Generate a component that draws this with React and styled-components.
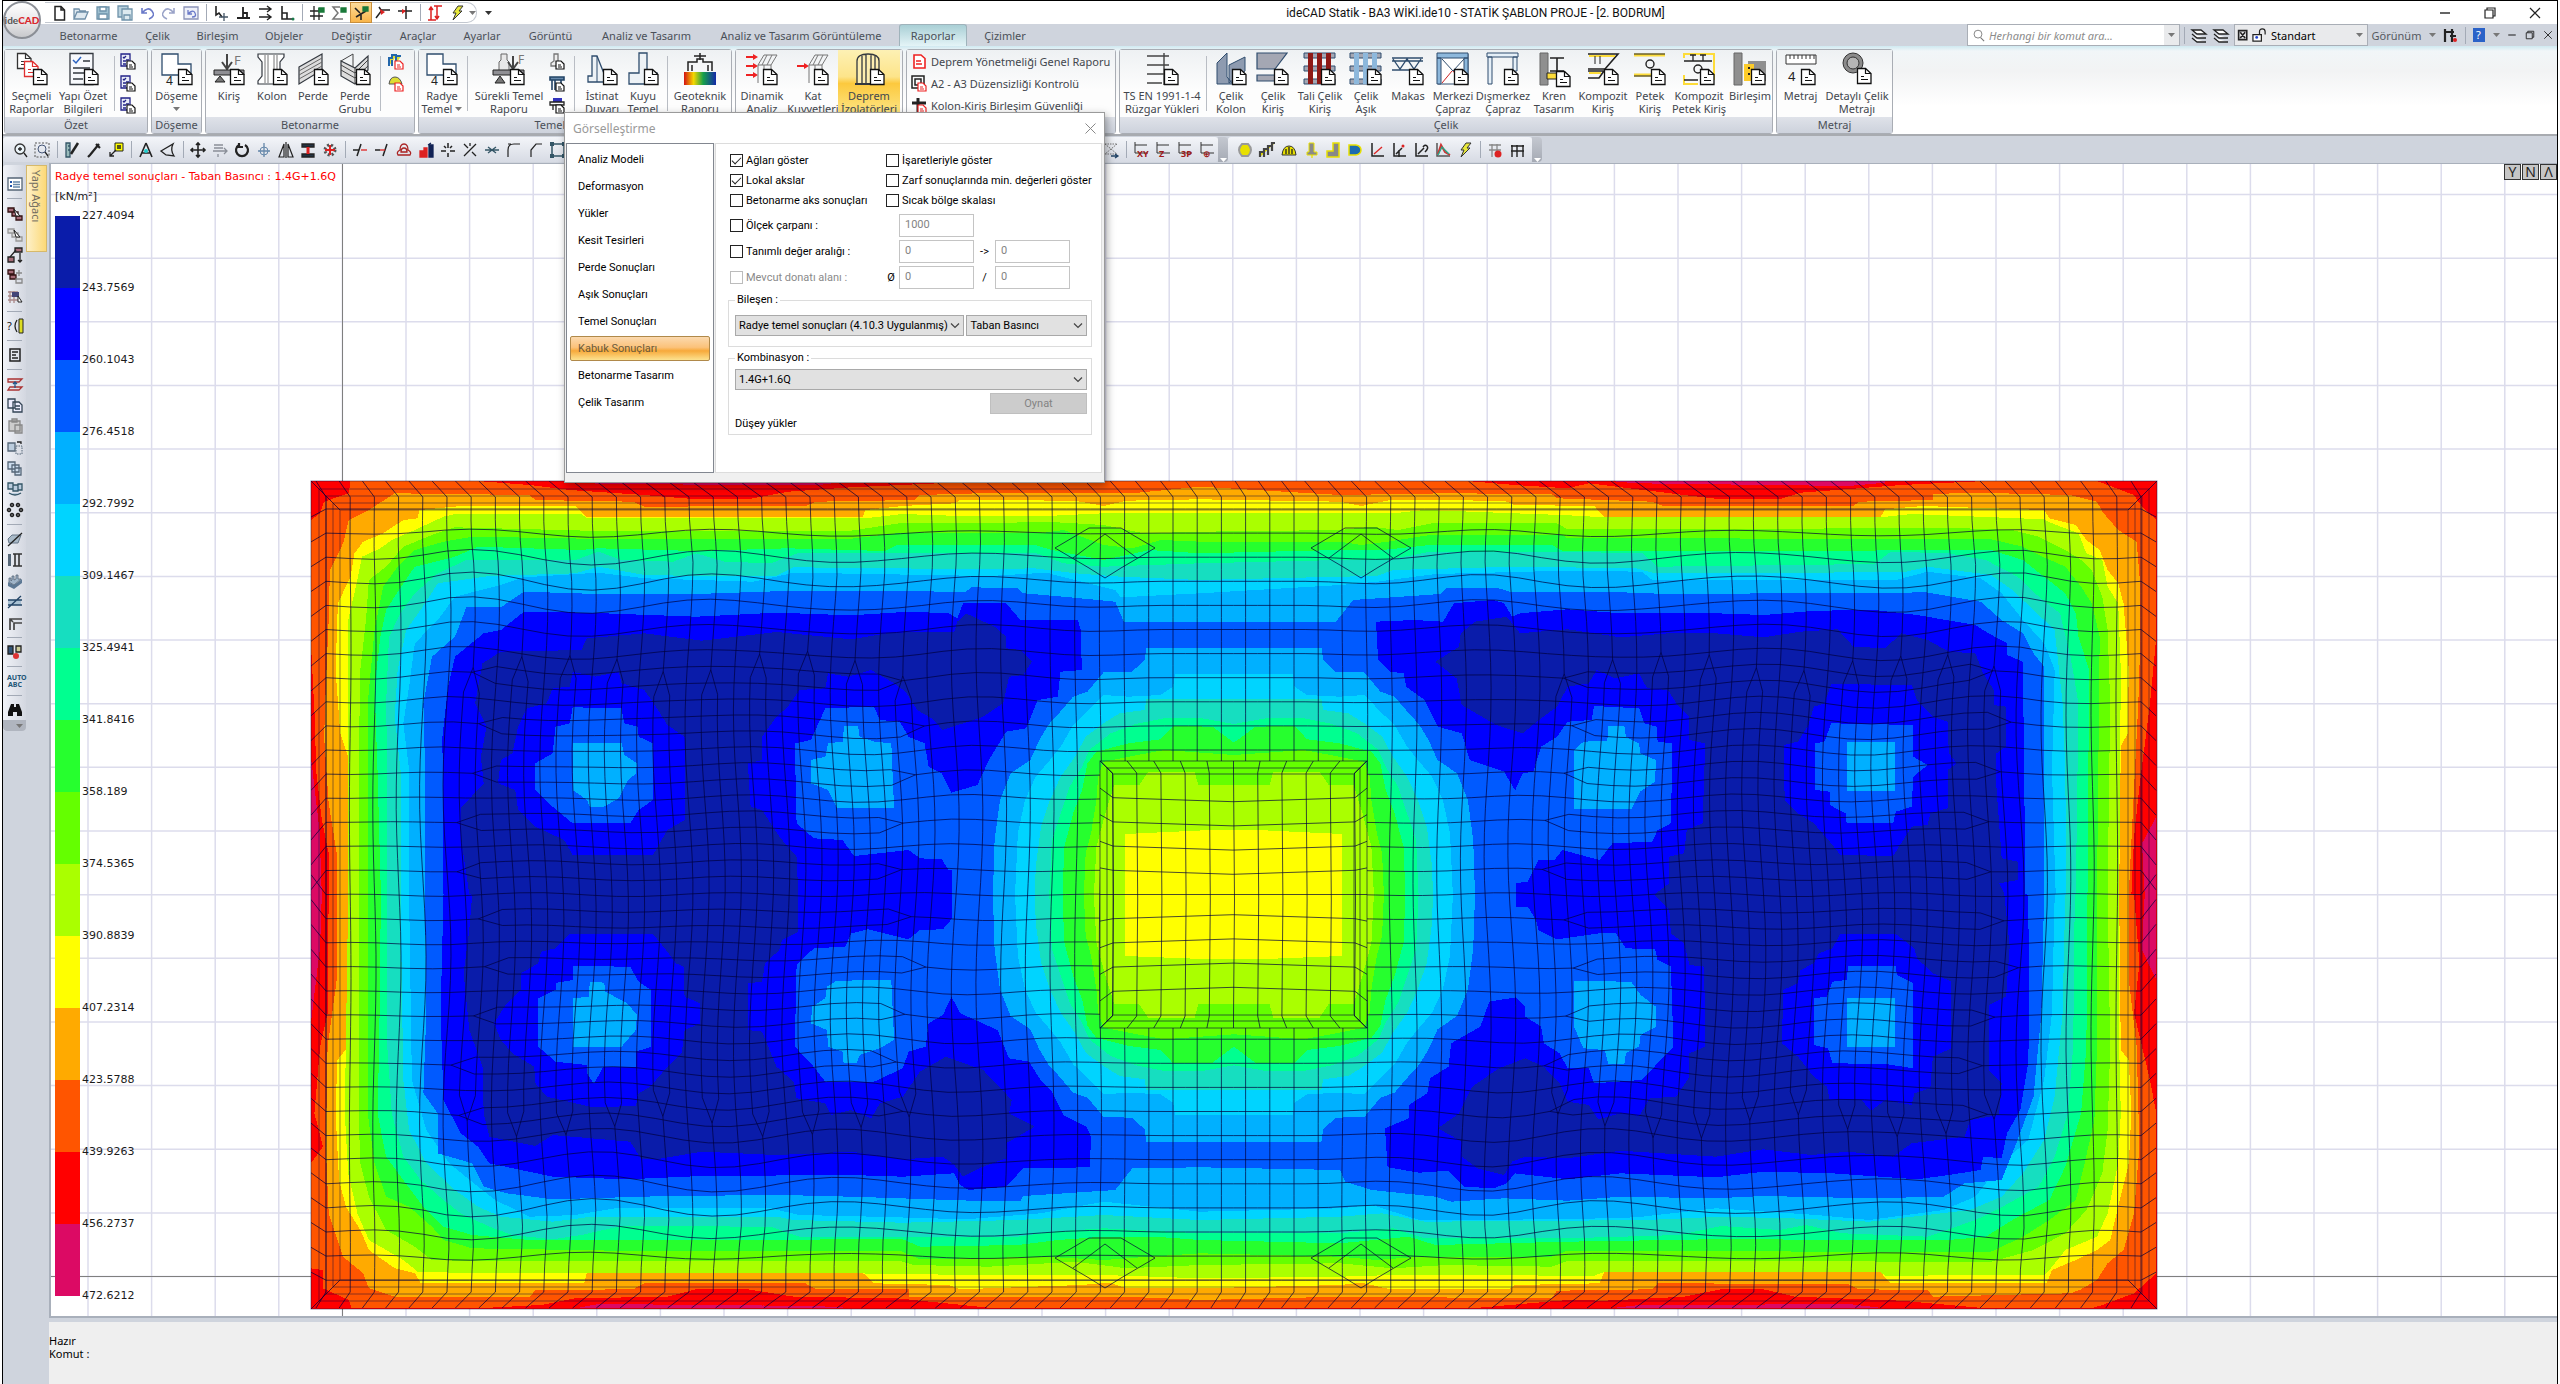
import React from "react";
import styled, { createGlobalStyle, css } from "styled-components";

const ui = `"Noto Sans", "Open Sans", sans-serif`;
const narrow = `Roboto, "Noto Sans", sans-serif`;
const verdana = `"DejaVu Sans", sans-serif`;

const Global = createGlobalStyle`
  *, *::before, *::after { box-sizing: border-box; }
  body { margin: 0; background: #fff; font-family: ${ui}; font-size: 11px; color: #1b1b1b; overflow: hidden; }
  button, input, select { font: inherit; color: inherit; margin: 0; }
  ul, ol { list-style: none; margin: 0; padding: 0; }
  svg { overflow: visible; }
`;

/* ---------- window ---------- */

const Window = styled.div`
  position: relative;
  display: flex;
  flex-direction: column;
  height: 100vh;
  margin: 0 2px;
  border: 1px solid #000;
  border-bottom: 0;
  background: #cfd4dd;
`;

const plain = css`
  border: 0;
  padding: 0;
  background: none;
  display: flex;
  align-items: center;
  justify-content: center;
`;

const TitleBar = styled.header`
  display: flex;
  align-items: center;
  height: 23px;
  background: #fff;
  padding-left: 42px;
`;
const QuickBar = styled.div`
  display: flex;
  align-items: center;
  width: 432px;
  height: 21px;
  padding-left: 3px;
  border: 1px solid #c3c8d0;
  border-left: 0;
  border-radius: 0 10px 10px 0;
`;
const ToolButton = styled.button`
  ${plain}
  flex: none;
  width: ${(p) => p.$w || 22}px;
  height: 21px;
  ${(p) => p.$on && "background: linear-gradient(#fddc9a, #f9b54a); border: 1px solid #c98f3c;"}
`;
const BarSep = styled.span`
  flex: none;
  width: ${(p) => p.$w || 8}px;
  height: 17px;
  background: linear-gradient(#a3aab6, #a3aab6) center / 1px 100% no-repeat;
`;
const Title = styled.h1`
  margin: 0;
  flex: 1;
  text-align: center;
  font: 400 12px ${narrow};
  color: #111;
  padding-left: 30px;
`;
const WinButton = styled.button`
  ${plain}
  width: 45px;
  height: 22px;
`;
const LogoButton = styled.button`
  ${plain}
  position: absolute;
  left: 0;
  top: 0;
  width: 38px;
  height: 38px;
  border-radius: 50%;
  border: 2px solid #8b8f96;
  background: linear-gradient(#ffffff, #e4e4e6 60%, #c8c9cc);
  font: 700 10px Lato, sans-serif;
  color: #555;
  b { color: #d9262c; }
`;

const TabRow = styled.nav`
  display: flex;
  height: 22px;
  padding-left: 43px;
  background: #cfd4dd;
`;
const Tab = styled.button`
  ${plain}
  width: ${(p) => p.$w}px;
  height: 22px;
  color: #4b5058;
  white-space: nowrap;
  ${(p) =>
    p.$on &&
    css`
      border: 1px solid #9fb3bb;
      border-bottom: 0;
      border-radius: 3px 3px 0 0;
      background: linear-gradient(#a9cfd5, #e4f4f7);
      margin-left: 3px;
    `}
`;
const TabTools = styled.div`
  display: flex;
  align-items: center;
  margin-left: auto;
  color: #55595f;
`;
const Search = styled.label`
  display: flex;
  align-items: center;
  width: 213px;
  height: 22px;
  border: 1px solid #a9aeb6;
  background: #fff;
  padding-left: 3px;
  input {
    flex: 1;
    min-width: 0;
    border: 0;
    padding: 0 4px;
    background: none;
    font-style: italic;
  }
  input::placeholder { color: #8b8b8b; opacity: 1; }
`;
const Drop = styled.span`
  display: flex;
  align-items: center;
  justify-content: center;
  width: ${(p) => p.$w || 15}px;
  height: 20px;
  background: ${(p) => p.$bg || "none"};
`;
const LayerBox = styled.label`
  display: flex;
  align-items: center;
  width: 134px;
  height: 22px;
  padding-left: 2px;
  gap: 2px;
  border: 1px solid #a9aeb6;
  background: #e9eaec;
  color: #000;
  margin-left: 2px;
  select { flex: 1; border: 0; background: none; appearance: none; padding: 0 2px; }
`;

/* ---------- ribbon ---------- */

const Ribbon = styled.div`
  display: flex;
  gap: 3px;
  height: 90px;
  padding: 3px 1px 2px;
  background: linear-gradient(#cfe9f1, #f1f6f8 5px, #f2f3f4 25px, #ffffff 60px);
  border-bottom: 2px solid #a8abb0;
`;
const GroupBox = styled.section`
  display: flex;
  flex-direction: column;
  flex: none;
  width: ${(p) => p.$w}px;
  height: 85px;
  border: 1px solid #a9adb4;
  border-radius: 3px;
`;
const GroupBody = styled.div`
  display: flex;
  flex: 1;
  background: linear-gradient(#eef1f3, #fdfdfd 60%);
`;
const GroupName = styled.h2`
  margin: 0;
  height: 16px;
  line-height: 16px;
  text-align: center;
  font-size: 11px;
  font-weight: 400;
  color: #4a4f57;
  background: linear-gradient(#dfe2e9, #cdd2dc);
`;
const Big = styled.button`
  border: 0;
  padding: 3px 0 0;
  background: ${(p) => (p.$on ? "linear-gradient(#fdf1b4, #fde48a 40%, #fcc93e 50%, #fde88c)" : "none")};
  width: ${(p) => p.$w}px;
  flex: none;
  display: flex;
  flex-direction: column;
  align-items: center;
  line-height: 13px;
  color: #42464d;
  white-space: nowrap;
`;
const ArtBox = styled.svg`
  flex: none;
  margin-bottom: 3px;
`;
const Line = styled.span`
  display: flex;
  align-items: center;
  gap: 3px;
  height: 13px;
`;
const Rule = styled.span`
  flex: none;
  width: ${(p) => p.$w}px;
  margin: 6px 0;
  background: linear-gradient(#b9bdc4, #b9bdc4) center / 1px 100% no-repeat;
`;
const SmallCol = styled.div`
  flex: none;
  width: ${(p) => p.$w}px;
  display: flex;
  flex-direction: column;
  button { ${plain} height: 22px; }
`;
const LinkCol = styled.div`
  display: flex;
  flex-direction: column;
  padding-left: 4px;
  button {
    ${plain}
    justify-content: flex-start;
    gap: 4px;
    height: 22px;
    color: #42464d;
    white-space: nowrap;
  }
`;

/* ---------- icon toolbar ---------- */

const IconRow = styled.div`
  display: flex;
  align-items: center;
  height: 27px;
  flex: none;
`;
const IconStrip = styled.div`
  display: flex;
  align-items: center;
  width: ${(p) => p.$w}px;
  height: 25px;
  padding-left: 6px;
  background: linear-gradient(#f3f5f9, #d7dbe4);
  border-radius: 3px;
`;
const Stretch = styled.span`
  flex: 1;
`;
const More = styled.button`
  ${plain}
  width: 10px;
  height: 25px;
  align-items: flex-end;
  background: linear-gradient(#c4c8d0, #a5aab4);
  border-radius: 0 4px 4px 0;
`;

/* ---------- work area ---------- */

const Body = styled.div`
  display: flex;
  flex: 1;
  min-height: 0;
`;
const Side = styled.aside`
  display: flex;
  align-items: flex-start;
  width: 46px;
  flex: none;
  padding-top: 2px;
`;
const SideTools = styled.div`
  display: flex;
  flex-direction: column;
  align-items: center;
  width: 23px;
  background: linear-gradient(90deg, #f1f3f8, #d3d7e0);
  border-radius: 3px;
  padding-top: 8px;
`;
const SideSep = styled.span`
  width: 15px;
  height: 8px;
  background: linear-gradient(#a3aab6, #a3aab6) center / 100% 1px no-repeat;
`;
const SideFoot = styled.span`
  width: 23px;
  height: 11px;
  display: flex;
  justify-content: flex-end;
  align-items: center;
  background: #b0b5bf;
  border-radius: 0 0 4px 4px;
  padding-right: 3px;
`;
const TreeTab = styled.button`
  ${plain}
  justify-content: flex-start;
  writing-mode: vertical-rl;
  width: 21px;
  height: 87px;
  padding: 4px 0;
  font-size: 11px;
  color: #6f6a5e;
  border: 1px solid #d6b96b;
  background: linear-gradient(90deg, #fdf0c8, #fcd977);
`;
const Work = styled.main`
  flex: 1;
  min-width: 0;
  display: flex;
  flex-direction: column;
`;
const Canvas = styled.div`
  position: relative;
  flex: 1;
  overflow: hidden;
  background: #fff;
  border: 1px solid #a9b0bb;
  border-right: 0;
  border-width: 1px 0 2px 2px;
  padding: 6px 0 0 4px;
  font-family: ${verdana};
  font-size: 11px;
`;
const Model = styled.svg`
  position: absolute;
  left: 0;
  top: 0;
  width: 100%;
  height: 100%;
`;
const Caption = styled.p`
  position: relative;
  margin: 0;
  line-height: 14px;
  margin-bottom: 6px;
  color: ${(p) => p.$c || "#1b1b1b"};
`;
const Scale = styled.div`
  position: relative;
  display: flex;
  gap: 2px;
  margin-top: -1px;
`;
const Swatches = styled.ul`
  width: 25px;
  padding-top: 7px;
`;
const Swatch = styled.li`
  height: 72px;
  background: ${(p) => p.$c};
`;
const Values = styled.ol`
  li { height: 72px; line-height: 14px; }
`;
const ViewKeys = styled.div`
  position: absolute;
  right: 0;
  top: 0;
  display: flex;
  gap: 1px;
  button {
    ${plain}
    width: 17px;
    height: 16px;
    background: #c6c6c6;
    border: 1px solid #333;
    font: 14px/14px ${ui};
    color: #222;
  }
`;
const Status = styled.footer`
  height: 62px;
  margin-top: 4px;
  padding-top: 12px;
  background: #efefef;
  font-size: 11px;
  line-height: 13px;
  color: #000;
  p { margin: 0; }
`;

/* ---------- dialog ---------- */

const Dialog = styled.section`
  position: absolute;
  left: 561px;
  top: 111px;
  width: 541px;
  height: 371px;
  display: flex;
  flex-direction: column;
  background: #f0f0f0;
  border: 1px solid #9a9a9a;
  box-shadow: 2px 3px 8px rgba(0, 0, 0, 0.35);
  font-family: ${narrow};
  color: #000;
`;
const DialogHead = styled.header`
  display: flex;
  justify-content: space-between;
  align-items: center;
  height: 30px;
  padding: 0 8px;
  background: #fff;
  color: #9a9a9a;
  h2 { margin: 0; font: 400 12px ${ui}; }
  button { ${plain} }
`;
const DialogBody = styled.div`
  display: flex;
  height: 330px;
  gap: 1px;
`;
const PageList = styled.ul`
  width: 148px;
  margin: 0 0 0 1px;
  padding: 3px;
  background: #fff;
  border: 1px solid #828790;
`;
const PageItem = styled.button`
  ${plain}
  justify-content: flex-start;
  width: 140px;
  height: 25px;
  margin-bottom: 2px;
  padding-left: 7px;
  border-radius: 2px;
  border: 1px solid ${(p) => (p.$on ? "#b0894a" : "transparent")};
  color: ${(p) => (p.$on ? "#6a5a3a" : "#000")};
  ${(p) => p.$on && "background: linear-gradient(#fbd9ae, #fbc27a 45%, #f7a93a 60%, #fce28f);"}
`;
const Pane = styled.form`
  flex: 1;
  margin-right: 2px;
  padding: 6px 9px 0 12px;
  background: #fff;
  border: 1px solid #dcdcdc;
`;
const Checks = styled.div`
  display: grid;
  grid-template-columns: 156px 1fr;
  grid-auto-rows: 20px;
  align-items: center;
  padding-left: 2px;
`;
const Fields = styled.div`
  display: grid;
  grid-template-columns: 153px 16px 75px 21px 75px;
  grid-auto-rows: 23px;
  row-gap: 3px;
  align-items: center;
  padding: 4px 0 0 2px;
  text-align: center;
`;
const CheckLabel = styled.label`
  display: flex;
  align-items: center;
  gap: 3px;
  white-space: nowrap;
  color: ${(p) => (p.$off ? "#8a8a8a" : "#000")};
  input {
    appearance: none;
    flex: none;
    display: grid;
    place-items: center;
    width: 13px;
    height: 13px;
    border: 1px solid ${(p) => (p.$off ? "#bcbcbc" : "#222")};
    background: #fff;
  }
  input:checked::after {
    content: "";
    width: 9px;
    height: 5px;
    border: solid #222;
    border-width: 0 0 1px 1px;
    transform: translateY(-1px) rotate(-45deg);
  }
`;
const Field = styled.input`
  width: 75px;
  height: 23px;
  padding: 0 5px 2px;
  border: 1px solid #c4c4c4;
  background: #fff;
  color: #838383;
`;
const Box = styled.fieldset`
  height: ${(p) => p.$h}px;
  margin: ${(p) => p.$mt}px 0 0;
  padding: ${(p) => p.$pt}px 4px 0 6px;
  border: 1px solid #dcdcdc;
  legend { height: 14px; line-height: 14px; padding: 0 2px; }
`;
const Row = styled.div`
  display: flex;
  gap: 2px;
  justify-content: ${(p) => p.$j || "flex-start"};
  margin-bottom: 3px;
`;
const Combo = styled.span`
  display: flex;
  align-items: center;
  position: relative;
  flex: ${(p) => p.$f};
  height: 21px;
  border: 1px solid #a9a9a9;
  background: #e1e1e1;
  select {
    appearance: none;
    width: 100%;
    height: 19px;
    padding: 0 3px;
    border: 0;
    background: none;
  }
  svg { position: absolute; right: 3px; pointer-events: none; }
`;
const Play = styled.button`
  ${plain}
  width: 97px;
  height: 21px;
  border: 1px solid #bfbfbf;
  background: #cccccc;
  color: #838383;
`;
const Note = styled.p`
  margin: 0;
  line-height: 14px;
`;

/* ---------- icons ---------- */

const Doc = ({ x = 17, y = 16, c = "#111" }) => (
  <g transform={`translate(${x} ${y})`}>
    <path d="M.5 .5h8l5.500 5v10H.5z" fill="#fff" stroke={c} strokeWidth="1.300" />
    <path d="M8.500 .5v5h5.500M4 8.500h3M4 11.500h7" fill="none" stroke={c} strokeWidth="1.200" />
  </g>
);
const K = "#33383f";
const N = "#2f4d6e";

const bigArt = {
  secmeli: (<><Doc x={1} y={0} c="#333" /><Doc x={8} y={8} c="#e03030" /><Doc /></>),
  ozet: (<><path d="M3 .5h23v31H3z" fill="#f7f9fc" stroke={K} strokeWidth="1.300" /><path d="M6 7l3 3 5-6" fill="none" stroke="#2b63c0" strokeWidth="1.500" /><path d="M16 8h7M6 15h17M6 20h12M6 26h10" stroke={K} strokeWidth="1.500" /><Doc /></>),
  doseme: (<><path d="M1 1h16v10h13v11H1z" fill="#fff" stroke={N} strokeWidth="1.300" /><text x="5" y="32" fontSize="12" fontFamily="Noto Sans, sans-serif" fill="#222">4</text><Doc /></>),
  kiris: (<><path d="M14 1v14M9 9l5 7 5-7" fill="none" stroke="#444" strokeWidth="2" /><text x="21" y="12" fontSize="13" fontFamily="Noto Sans, sans-serif" fill="#777">F</text><path d="M1 17h30v5H1z" fill="#8f8f94" stroke="#222" /><path d="M7 23l5 6H2z" fill="#777" stroke="#222" /><Doc /></>),
  kolon: (<><path d="M2 1h26v3l-4 5v14l4 5v3H2v-3l4-5V9L2 4z" fill="#fff" stroke={K} strokeWidth="1.200" /><path d="M9 2v28M12 2v28M18 2v28M21 2v28" stroke="#777" /><Doc /></>),
  perde: (<><path d="M2 14L25 1v16L2 31z" fill="#ddd" stroke={K} strokeWidth="1.200" /><path d="M2 18L25 5M2 22L25 9M2 26L25 13" stroke="#666" /><Doc /></>),
  grup: (<><path d="M2 8l14 7L29 3v14L16 31 2 23z" fill="#ddd" stroke={K} strokeWidth="1.200" /><path d="M16 15v16M2 8L14 1v13M2 12l14 8 13-13M2 17l14 8 13-12" stroke="#444" fill="none" /><Doc /></>),
  surekli: (<><path d="M6 17V9l2-2V1h6v6l2 2v8" fill="#e8e8e8" stroke="#666" /><path d="M20 3v14M15 9l5 7 5-7" fill="none" stroke="#444" strokeWidth="2" /><text x="25" y="11" fontSize="12" fontFamily="Noto Sans, sans-serif" fill="#777">F</text><path d="M0 17h31v5H0z" fill="#8f8f94" stroke="#222" /><path d="M7 23l5 7H2z" fill="#777" stroke="#222" /><Doc /></>),
  istinat: (<><path d="M6 3h5l8 20h9v6H2v-6h4z" fill="#edf2f6" stroke={N} strokeWidth="1.300" /><path d="M11 3v26" stroke={N} /><Doc /></>),
  kuyu: (<><path d="M12 0h8v20h10v11H2V20h10z" fill="#edf2f6" stroke={N} strokeWidth="1.300" /><Doc /></>),
  geo: (<><defs><linearGradient id="soil"><stop offset="0" stopColor="#d41212" /><stop offset=".3" stopColor="#f5d800" /><stop offset=".6" stopColor="#17a04a" /><stop offset="1" stopColor="#1429a8" /></linearGradient></defs><path d="M16 0v7M10 3h12M4 18V9h9V6h6v3h9v9M8 12v6M24 12v6" stroke="#222" fill="none" strokeWidth="1.500" /><path d="M0 19h32v13H0z" fill="url(#soil)" /></>),
  dinamik: (<><path d="M0 4h9M0 13h9M0 22h9" stroke="#e22" strokeWidth="2" /><path d="M7 1l5 3-5 3zM7 10l5 3-5 3zM7 19l5 3-5 3z" fill="#e22" /><path d="M12 12L18 2h13l-6 10zM18 12V28M25 12v8M21 2l-5 10M26 2l-5 10M12 12v18" fill="none" stroke="#777" /><Doc /></>),
  kat: (<><path d="M0 13h9" stroke="#e22" strokeWidth="2" /><path d="M7 10l5 3-5 3z" fill="#e22" /><path d="M12 12L18 2h13l-6 10zM18 12V28M25 12v8M21 2l-5 10M26 2l-5 10M12 12v18" fill="none" stroke="#777" /><Doc /></>),
  deprem: (<><path d="M4 31V8q0-7 11-7t11 7v23zM9 3v28M13 1v30M18 1v30M22 3v28" fill="#fdeeb0" stroke={K} strokeWidth="1.300" /><path d="M2 31h26" stroke={K} strokeWidth="2" /><Doc /></>),
  ruzgar: (<><path d="M1 3h22M1 12h22M1 21h18M1 30h15M18 0v32" stroke="#444" strokeWidth="1.400" /><Doc x={18} /></>),
  ckolon: (<><path d="M2 10L12 0v24l6 7H2zM14 12l16-8v14L14 30z" fill="#8e9bb0" stroke={N} /><Doc /></>),
  ckiris: (<><path d="M0 0h30L18 16H0zM0 22h22v6H0z" fill="#a4a7b3" stroke={N} strokeWidth="1.200" /><Doc /></>),
  tali: (<><path d="M0 0h31v5H0zM0 13h31v5H0zM0 26h31v5H0z" fill="#a4a7b3" stroke={N} /><path d="M4 0h5v31H4zM13 0h5v31h-5zM22 0h5v20h-5z" fill="#8e1a16" /><Doc /></>),
  asik: (<><path d="M0 0h31v5H0zM0 13h31v5H0zM0 26h31v5H0z" fill="#a4a7b3" stroke={N} /><path d="M4 0h5v31H4zM13 0h5v31h-5zM22 0h5v20h-5z" fill="#8db8dc" /><Doc /></>),
  makas: (<><path d="M0 5h31M0 17h22M1 6l7 10 7-10 7 10 7-10M0 8h31" fill="none" stroke={N} strokeWidth="1.300" /><Doc /></>),
  merkez: (<><path d="M1 1h30v30H1z" fill="#fff" stroke={N} /><path d="M0 0h31v5H0zM0 5h4v26H0zM27 5h4v20h-4z" fill="#8db8dc" stroke={N} /><path d="M5 6l11 12L27 6" fill="none" stroke={N} /><path d="M5 30l10-12M26 30L16 18" stroke="#c22" /><Doc /></>),
  dis: (<><path d="M0 0h31v4H0zM1 4h4v27H1zM26 4h4v14h-4z" fill="#e6f0f8" stroke={N} /><Doc /></>),
  kren: (<><path d="M2 0h8v32H2z" fill="#8f8f8f" stroke="#666" /><path d="M12 5h14M19 5v13M12 18h14" stroke="#222" strokeWidth="1.600" /><path d="M9 20h18v6H9z" fill="#fddc3a" stroke="#222" /><Doc x={18} y={18} /></>),
  kompozit: (<><path d="M1 1h30L18 16H1M1 18h16l-5 7h-11" fill="none" stroke="#222" strokeWidth="1.600" /><path d="M2 3h26M2 20h12" stroke="#fddc3a" strokeWidth="2" /><path d="M8 3v8M13 3v8" stroke="#222" /><Doc /></>),
  petek: (<><path d="M0 2h31M0 22h18" stroke="#fddc3a" strokeWidth="3" /><path d="M0 1h31M0 23h18" stroke="#222" /><circle cx="16" cy="11" r="4" fill="none" stroke="#222" strokeWidth="1.400" /><Doc /></>),
  kpetek: (<><path d="M1 5V1h30v26M1 22v9h14" stroke="#fddc3a" strokeWidth="2" fill="none" /><path d="M1 8h28M1 27h14M10 2v6M20 2v6M7 2h6M17 2h6" stroke="#222" strokeWidth="1.300" /><circle cx="15" cy="16" r="4" fill="none" stroke="#222" strokeWidth="1.400" /><Doc /></>),
  birlesim: (<><path d="M0 0h8v32H0z" fill="#8f8f8f" stroke="#666" /><path d="M14 8h18v20H14z" fill="#8f8f8f" /><path d="M10 11h10v17H10z" fill="#fdcc2a" /><path d="M15 14v2M15 20v2" stroke="#222" strokeWidth="2" /><Doc /></>),
  metraj: (<><path d="M1 2h30v9H1z" fill="#fff" stroke="#333" /><path d="M5 2v4M9 2v4M13 2v4M17 2v4M21 2v4M25 2v4M29 2v4" stroke="#333" /><text x="3" y="28" fontSize="13" fontFamily="Noto Sans, sans-serif" fill="#222">4</text><Doc x={16} /></>),
  detay: (<><circle cx="12" cy="10" r="10" fill="#8b8b8b" stroke="#333" /><circle cx="12" cy="10" r="6" fill="#b5b5b5" stroke="#333" /><Doc x={16} y={15} /></>),
};
const Art = ({ name }) => (
  <ArtBox width="32" height="33" viewBox="0 0 32 33" aria-hidden="true">{bigArt[name]}</ArtBox>
);

const P = ({ d, s = "#222", f = "none", w = 1.3 }) => <path d={d} stroke={s} fill={f} strokeWidth={w} />;
const smallDoc = (c = "#111") => (
  <path d="M7 8h5l3 3v5H7zM9 12h3M9 14h4" fill="#fff" stroke={c} strokeWidth="1.200" />
);

const glyphs = {
  new: <P d="M4 1.500h6l3.500 3.500v10H4zM10 1.500V5h3.500" w={1.500} />,
  open: <P d="M1 14l3-7h11l-3 7zM1 14V4h5l1 2h6" s="#6f8fa8" f="#dfe9f0" />,
  save: <><P d="M2 2h12v12H2z" s="#6f93aa" f="#9fc0d0" /><P d="M5 2h6v4H5zM4 9h8v5H4z" s="#6f93aa" f="#fff" /></>,
  saveAll: <><P d="M1 1h10v11H1z" s="#6f93aa" f="#b9d2de" /><P d="M5 4h10v11H5zM7 10h6v5H7z" s="#6f93aa" f="#dce9ef" /></>,
  undo: <P d="M3 3v5h5M3 8q6-7 10-2t-3 8" s="#6a79c8" w={1.600} />,
  redo: <P d="M13 3v5H8M13 8q-6-7-10-2t3 8" s="#9aa3c8" w={1.600} />,
  undoBox: <><P d="M1 2h14v12H1z" s="#8b93b8" f="#eef0f8" /><P d="M5 5v4h4M5 9q5-5 7-1t-3 4" s="#6a79c8" /></>,
  cursor: <><P d="M3 1v9l3-2 3 4" w={1.600} /><P d="M6 12h9M11 8v8" s="#456" /></>,
  ortho: <P d="M8 2v11M2 13h13M8 8h4v5" w={1.800} />,
  para: <P d="M2 4h11M10 1l4 3-4 3M2 12h11M10 9l4 3-4 3" w={1.400} />,
  angle: <><P d="M3 1v13h12M3 8h5v6" w={1.600} /><circle cx="14" cy="14" r="1.500" fill="#1a7a4a" /></>,
  hash: <><P d="M5 1v14M10 3v12M1 6h13M1 11h13" /><P d="M10 3h5v4h-5z" f="#1a7a3a" s="#1a7a3a" /></>,
  sigma: <><P d="M9 2H2l5 6-5 6h10" s="#777" w={1.500} /><P d="M10 3h5v4h-5z" f="#1a7a3a" s="#1a7a3a" /></>,
  snap: <><P d="M2 3l5 5M8 8v7M3 12l10-6" w={1.600} /><P d="M10 2h5v4h-5z" f="#1a7a3a" s="#1a7a3a" /></>,
  near: <><P d="M1 13l6-8 8 0M6 5L4 2" w={1.500} /><path d="M5 4l5 3-4 3z" fill="#d22" /></>,
  mid: <><P d="M1 6h14M9 1v13" w={1.500} /><path d="M5 4l4 2-4 3z" fill="#d22" /></>,
  updown: <P d="M4 15V2M2 5l2-3 2 3M10 1v13M8 11l2 3 2-3M1 15h8M7 1h8" s="#d22" w={1.500} />,
  bolt: <path d="M9 1h5l-4 5h3L4 15l3-7H4z" fill="#e8e83a" stroke="#333" />,
  zoomP: <><circle cx="8" cy="7" r="5" fill="#eaf3f8" stroke="#333" strokeWidth="1.300" /><P d="M12 11l3 4M6 7h4M8 5v4" /></>,
  zoomW: <><path d="M1 1h14v14H1z" fill="none" stroke="#555" strokeDasharray="2 1.500" /><circle cx="8" cy="7" r="4" fill="none" stroke="#457" /><P d="M11 10l3 4" /></>,
  ruler: <><P d="M2 1h4v14H2zM4 4h2M4 8h2" s="#356" f="#9bb" /><P d="M14 1L7 12" w={2.500} /></>,
  pick: <P d="M13 2L4 13l-2 2M10 2l4 4" w={2.200} />,
  note: <><path d="M7 1h8v8H7z" fill="#ff0" stroke="#222" /><P d="M9 4h4M9 6h4M2 14l6-6M2 10v4h4" /></>,
  compass: <><P d="M8 1L2 15M8 1l6 14M4 11h8" w={1.600} /><circle cx="8" cy="9" r="2" fill="#2cc" /></>,
  shape: <P d="M1 9L13 2q-3 6 1 12L6 13z" w={1.300} />,
  move: <P d="M8 1v14M1 8h14M6 3l2-2 2 2M6 13l2 2 2-2M3 6L1 8l2 2M13 6l2 2-2 2" w={1.600} />,
  moveG: <P d="M2 3h9M2 6h9M1 9h14M12 6l3 3-3 3M6 12v3" s="#8a8f98" />,
  rotate: <P d="M11 3a6 6 0 1 1-6 0M5 1v4h4" w={2.200} />,
  rotC: <><circle cx="8" cy="9" r="4" fill="none" stroke="#68a" /><P d="M8 1v14M2 9h12" s="#68a" /></>,
  mirror: <P d="M6 2v13H1zM10 2v13h5zM8 0v16" w={1.200} />,
  ibeam: <><P d="M2 2h12v3H2zM2 12h12v3H2z" f="#234" /><P d="M8 5v7" s="#d22" w={3} /></>,
  gearR: <><circle cx="8" cy="8" r="5" fill="none" stroke="#555" strokeWidth="3" strokeDasharray="2 2" /><P d="M8 3v10M3 8h10" s="#d22" w={2} /></>,
  trim: <><P d="M5 14L9 2M1 8h6" w={1.500} /><P d="M9 8h6" s="#d22" /></>,
  extend: <><P d="M9 14l4-12M1 8h5" w={1.500} /><P d="M6 8h5" s="#d22" /></>,
  dome: <P d="M2 13h12q2-3-2-5 0-6-4-6T4 8q-4 2-2 5zM5 10h6q0-4-3-4t-3 4z" s="#a22" />,
  bars: <><P d="M2 9h3v6H2zM6 6h3v9H6z" f="#d22" s="#d22" /><P d="M11 3h4v12h-4zM10 3l3-2" f="#125" s="#125" /></>,
  burst: <P d="M8 1v5M1 9h5M10 9h5M8 11v4M4 4l2 2M12 4l-2 2" w={1.500} />,
  cross: <P d="M2 14L14 2M2 2l4 4M10 10l4 4M8 1v3" w={1.300} />,
  bowtie: <P d="M1 8h14M4 5l8 6M4 11l8-6" s="#356" />,
  arc: <P d="M2 15V8q0-6 6-6h6M2 2h3" w={1.200} />,
  arc2: <P d="M3 15V8l5-6h6" w={1.200} />,
  frame: <><P d="M2 2h12v12H2z" s="#356" w={1.500} /><path d="M0 0h4v4H0zM12 0h4v4h-4zM0 12h4v4H0zM12 12h4v4h-4z" fill="#356" /></>,
  xnet: <><path d="M2 2l12 10M14 2L2 12M2 2h12M2 12h12" stroke="#777" strokeDasharray="1.500 1" fill="none" /><P d="M8 14h6M12 12l3 2-3 2" s="#246" /></>,
  xy: <Plane t="XY" />, z: <Plane t="Z" />, p3: <Plane t="3P" />, pc: <Plane t="⊕" />,
  pill: <path d="M5 2h6q3 3 3 6t-3 6H5q-3-3-3-6t3-6z" fill="#e8e000" stroke="#999" strokeWidth="2" />,
  steps: <P d="M1 15v-5h4V7h4V4h4V1h3M5 15v-5M9 13V7M13 9V4" s="#444" w={2.200} f="#e8e000" />,
  halfdome: <><path d="M1 13q1-9 7-9t7 9z" fill="#e8e000" stroke="#333" /><P d="M5 12V7M8 12V5M11 12V7" /></>,
  foot: <><path d="M6 1h5v9h3v3H4v-3h2z" fill="#8a8a8a" stroke="#e8e000" /><P d="M9 13v3" s="#e8e000" /></>,
  lblock: <path d="M8 1h6v14H2V9h6z" fill="#888" stroke="#e8e000" strokeWidth="1.500" />,
  dshape: <path d="M2 3h7q5 1 5 5t-5 5H2z" fill="#1c6cb0" stroke="#e8e000" strokeWidth="1.500" />,
  ax1: <><P d="M3 1v13h12" w={1.500} /><P d="M5 12l8-7" s="#d22" /></>,
  ax2: <><P d="M3 1v13h12M5 12l6-6M8 15V8" w={1.500} /><circle cx="12" cy="4" r="1.500" fill="#d22" /></>,
  ax3: <P d="M3 1v13h12M5 12l6-6M10 5q2-3 4-1t-2 6" w={1.500} />,
  graph: <><P d="M2 1v13h13" w={1.500} s="#555" /><P d="M3 12l3-9 4 7 5 3" s="#c33" w={2} /><P d="M3 13l4-8 7 7" s="#2a8" /></>,
  gridR: <><P d="M2 3h12M2 8h12M5 2v13M10 2v13" s="#888" /><circle cx="11" cy="12" r="3.500" fill="#d22" /></>,
  grid: <P d="M2 4h13M2 9h13M3 3v12M8 3v12M14 3v12" w={1.400} />,
  list: <><path d="M1 2h14v12H1z" fill="#fff" stroke="#567" strokeWidth="1.300" /><P d="M6 6h7M6 8.500h7M6 11h7" s="#68a" /><path d="M3 5h2v2H3zM3 9h2v2H3z" fill="#25a" /></>,
  selA: <><P d="M1 3h6v4H1zM5 7h6v4H5zM9 11h6v4H9z" s="#311" f="#a66c78" /><path d="M7 4l6 7h-4z" fill="#fff" stroke="#222" /></>,
  selB: <><P d="M1 3h6v4H1zM5 7h6v4H5zM9 11h6v4H9z" s="#999" f="#ddd" /><path d="M7 4l6 7h-4z" fill="#fff" stroke="#222" /></>,
  selC: <><P d="M1 10h6v5H1zM8 1h7v4H8z" s="#222" f="#a66c78" /><P d="M13 6v9M11 13l2 2 2-2M3 10l6-7" /></>,
  selD: <><P d="M1 2h6v4H1zM3 7h6v4H3z" s="#311" f="#a66c78" /><P d="M9 11h6v4H9zM12 2v6M9 5h6" s="#888" /></>,
  selE: <><P d="M1 3h10M1 7h10M1 11h10M3 2v12M7 2v12" s="#a88" /><path d="M5 3h7v5H5z" fill="#447" /><path d="M11 7l4 6h-4z" fill="#fff" stroke="#222" /></>,
  measure: <><text x="0" y="12" fontSize="11" fill="#111" fontFamily="Noto Sans, sans-serif">?</text><P d="M10 2q-4 6 0 12" /><path d="M12 1h4v14h-4z" fill="#dd2" stroke="#222" /></>,
  sheet: <P d="M3 2h10v12H3zM5 5h6M5 8h4M5 11h6" w={1.500} />,
  levels: <><P d="M1 3h14l-3 3H1zM1 14h11l3-3H3z" s="#a33" /><P d="M8 6v6M6 8l2-2 2 2" s="#258" /></>,
  copy: <P d="M1 2h7v9H1zM6 5h6l3 3v7H6zM8 9h5M8 12h5" f="#eef" s="#345" />,
  paste: <P d="M2 3h11v10H2zM8 7h7v8H8zM5 1h5v3H5z" s="#888" f="#ccc" />,
  cloneA: <><P d="M1 4h7v8H1z" s="#567" f="#bcd" /><path d="M9 7h6v8H9z" fill="none" stroke="#567" strokeDasharray="1.500 1" /><P d="M10 3h4v2" /></>,
  cloneB: <P d="M1 2h7v7H1zM5 5h7v7H5zM8 8h6v7H8z" s="#567" f="#cde" />,
  cloneC: <P d="M1 2h5v6H1zM6 4h5v6H6zM11 3h4v6h-4zM2 12q6 4 12 0" s="#356" f="#bcd" />,
  ring: <g fill="#555" stroke="#111"><circle cx="5" cy="3" r="1.800" /><circle cx="11" cy="3" r="1.800" /><circle cx="2" cy="8" r="1.800" /><circle cx="14" cy="8" r="1.800" /><circle cx="5" cy="13" r="1.800" /><circle cx="11" cy="13" r="1.800" /></g>,
  slabA: <><path d="M1 8l4-4h9l-3 8H2z" fill="#a9bac8" stroke="#678" /><P d="M1 15L15 2" /></>,
  slabB: <><path d="M1 2h3v12H1z" fill="#567" /><P d="M6 2h9M6 14h9M8 2v12M12 2v12" s="#333" w={1.600} /></>,
  slabC: <><path d="M1 9l6 3 8-6v4l-8 6-6-3z" fill="#5c7894" /><path d="M2 9V5h2v3l1-1V3h2v4l2-1V2h2v4l3 0-7 6z" fill="#9fb4c8" stroke="#567" strokeWidth="0.800" /></>,
  slabD: <><path d="M1 6h13v5H1z" fill="#aac2d4" /><P d="M1 14L14 2M1 6h14M1 11h14" s="#246" /></>,
  corner: <P d="M3 15V4h12M7 15V8h8M3 4l3 3" s="#444" w={1.700} />,
  colors: <><P d="M1 2h5v8H1z" f="#357" /><P d="M9 2h5v6H9z" f="#cc9" /><circle cx="9" cy="12" r="3" fill="#d33" /></>,
  auto: <><text x="0" y="7" fontSize="7" fontWeight="700" fill="#257" fontFamily="Noto Sans, sans-serif">AUTO</text><text x="1" y="14" fontSize="7" fontWeight="700" fill="#257" fontFamily="Noto Sans, sans-serif">ABC</text></>,
  find: <path d="M4 2h3v3h2V2h3l3 8v4h-5v-4H6v4H1v-4z" fill="#111" />,
  rlist: <><P d="M1 1h9v12H1z" f="#e9edf7" s="#228" /><P d="M3 4l1 1 2-2M6 7h3M3 8h3M3 11h3" s="#228" />{smallDoc()}</>,
  rsteps: <><P d="M1 13V5h3V2h5M4 13V7M8 11V3h5" s="#26a" w={2} f="#dd3" />{smallDoc("#e22")}</>,
  rdome: <><path d="M1 9q1-7 6-7t7 7z" fill="#dd3" stroke="#555" />{smallDoc("#e22")}</>,
  rtower: <><P d="M2 13v-3l3-2V1h4v7l3 2v3z" s="#777" f="#eee" />{smallDoc()}</>,
  rgate: <><P d="M1 2h14v3H1zM3 5v10M6 5v10M12 5v5" s="#246" f="#68a" w={1.600} />{smallDoc()}</>,
  rtable: <><path d="M4 1h9v4H4z" fill="#33b" /><P d="M1 5h14v3H1zM4 8v5M12 8v3" />{smallDoc()}</>,
  rdoc: <P d="M3 2h7l4 3.500V15H3zM5 8h5M5 11h6" s="#e22" f="#fff" w={1.600} />,
  rframe: <><P d="M1 1h12v12H1zM4 4h6v6H4z" w={1.500} />{smallDoc("#e22")}</>,
  rjoint: <><P d="M1 6h14M7 1v14" w={3} />{smallDoc("#e22")}</>,
  layers: <P d="M1 3h9l5 4H6zM1 7l5 4h9M1 11l5 4h9" f="#fff" />,
  tools: <><P d="M3 2v13M10 2v13M3 5h9M8 9h6" w={2.200} /><circle cx="13" cy="13" r="2" fill="#d22" /></>,
  book: <><path d="M2 1h12v14H2z" fill="#2a62c8" /><text x="5" y="12" fontSize="11" fill="#fff" fontFamily="Noto Sans, sans-serif">?</text></>,
  xbox: <P d="M2 2h10v11H2zM4 4l6 7M10 4l-6 7" w={2} />,
  lock: <><P d="M1 7h9v7H1z" f="#fff" /><P d="M8 7V4q0-3 3-3t3 3v3" /><circle cx="5" cy="10" r="1.500" fill="#24c" /></>,
  lens: <><circle cx="8" cy="7" r="4.500" fill="none" stroke="#777" /><P d="M11 11l4 4" s="#777" /></>,
  winMin: <P d="M3 8h10" w={1.400} />,
  winMax: <P d="M3 5h8v8H3zM5 5V3h8v8h-2" w={1.200} />,
  winX: <P d="M3 3l10 10M13 3L3 13" w={1.200} />,
};
function Plane({ t }) {
  return (
    <>
      <path d="M2 0v11h13M2 3h12" fill="none" stroke="#333" />
      <text x="4" y="15" fontSize="9" fontWeight="700" fill="#a01818" fontFamily="Noto Sans, DejaVu Sans, sans-serif">{t}</text>
    </>
  );
}
const Icon = ({ name, size = 16 }) => (
  <svg width={size} height={size} viewBox="0 0 16 16" aria-hidden="true">{glyphs[name]}</svg>
);
const Caret = ({ c = "#777" }) => (
  <svg width="7" height="4" viewBox="0 0 7 4" aria-hidden="true"><path d="M0 0h7L3.500 4z" fill={c} /></svg>
);
const Chevron = () => (
  <svg width="10" height="6" viewBox="0 0 10 6" aria-hidden="true"><path d="M1 .5l4 4 4-4" fill="none" stroke="#444" strokeWidth="1.200" /></svg>
);

/* ---------- data ---------- */

const tabs = [["Betonarme", 85], ["Çelik", 53], ["Birleşim", 67], ["Objeler", 66], ["Değiştir", 69], ["Araçlar", 64], ["Ayarlar", 64], ["Görüntü", 73], ["Analiz ve Tasarım", 119], ["Analiz ve Tasarım Görüntüleme", 190], ["Raporlar", 68], ["Çizimler", 76]];

const quick = ["new", "open", "save", "saveAll", "undo", "redo", "undoBox", "|", "cursor", "ortho", "para", "angle", "|", "hash", "sigma", "snap*", "near", "mid", "|", "updown", "bolt"];
const stripA = ["zoomP", "zoomW", "|", "ruler", "pick", "note", "|", "compass", "shape", "|", "move", "moveG", "rotate", "rotC", "mirror", "ibeam", "gearR", "|", "trim", "extend", "dome", "bars", "burst", "cross", "bowtie", "arc", "arc2", "frame"];
const stripA2 = ["xnet", "|", "xy", "z", "p3", "pc"];
const stripB = ["pill", "steps", "halfdome", "foot", "lblock", "dshape", "ax1", "ax2", "ax3", "graph", "bolt", "|", "gridR", "grid"];
const sideIcons = ["list", "|", "selA", "selB", "selC", "selD", "selE", "|", "measure", "|", "sheet", "|", "levels", "copy", "paste", "cloneA", "cloneB", "cloneC", "ring", "|", "slabA", "slabB", "slabC", "slabD", "corner", "|", "colors", "|", "auto", "|", "find"];

const groups = [
  { name: "Özet", w: 144, items: [["secmeli", 53, "Seçmeli", "Raporlar"], ["ozet", 50, "Yapı Özet", "Bilgileri"], ["|", 12], ["small", 16, "rlist", "rlist", "rlist"]] },
  { name: "Döşeme", w: 51, items: [["doseme", 49, "Döşeme", "▾"]] },
  { name: "Betonarme", w: 210, items: [["kiris", 46, "Kiriş"], ["kolon", 40, "Kolon"], ["perde", 42, "Perde"], ["grup", 42, "Perde", "Grubu"], ["|", 8], ["small", 24, "rsteps", "rdome"]] },
  { name: "Temel Raporları", w: 314, items: [["doseme", 46, "Radye", "Temel ▾"], ["|", 4], ["surekli", 80, "Sürekli Temel", "Raporu"], ["small", 16, "rtower", "rgate", "rtable"], ["|", 18], ["istinat", 38, "İstinat", "Duvarı"], ["kuyu", 44, "Kuyu", "Temel"], ["|", 4], ["geo", 62, "Geoteknik", "Raporu"]] },
  { name: "Analiz", w: 168, items: [["dinamik", 52, "Dinamik", "Analiz"], ["kat", 50, "Kat", "Kuvvetleri"], ["deprem", 62, "Deprem", "İzolatörleri"]] },
  { name: "Kontrol", w: 210, links: [["rdoc", "Deprem Yönetmeliği Genel Raporu"], ["rframe", "A2 - A3 Düzensizliği Kontrolü"], ["rjoint", "Kolon-Kiriş Birleşim Güvenliği"]] },
  { name: "Çelik", w: 654, items: [["ruzgar", 84, "TS EN 1991-1-4", "Rüzgar Yükleri"], ["|", 4], ["ckolon", 46, "Çelik", "Kolon"], ["ckiris", 38, "Çelik", "Kiriş"], ["tali", 56, "Tali Çelik", "Kiriş"], ["asik", 36, "Çelik", "Aşık"], ["makas", 48, "Makas"], ["merkez", 42, "Merkezi", "Çapraz"], ["dis", 58, "Dışmerkez", "Çapraz"], ["kren", 44, "Kren", "Tasarım"], ["kompozit", 54, "Kompozit", "Kiriş"], ["petek", 40, "Petek", "Kiriş"], ["kpetek", 58, "Kompozit", "Petek Kiriş"], ["birlesim", 44, "Birleşim"]] },
  { name: "Metraj", w: 117, items: [["metraj", 47, "Metraj"], ["detay", 66, "Detaylı Çelik", "Metrajı"]] },
];

const C = {
  navy: "#0a1caa", blue: "#0000ff", azure: "#005aff", sky: "#00b0ff", cyan: "#00d4ff", teal: "#16dec0",
  spring: "#00ff90", green: "#26ff2e", leaf: "#64ff00", lime: "#aaff00", yellow: "#ffff00",
  amber: "#ffaa00", orange: "#ff5500", red: "#ff0000", crimson: "#dc0a64",
};
const scaleColors = Object.values(C);
const scaleValues = ["227.4094", "243.7569", "260.1043", "276.4518", "292.7992", "309.1467", "325.4941", "341.8416", "358.189", "374.5365", "390.8839", "407.2314", "423.5788", "439.9263", "456.2737", "472.6212"];

const pages = ["Analiz Modeli", "Deformasyon", "Yükler", "Kesit Tesirleri", "Perde Sonuçları", "Aşık Sonuçları", "Temel Sonuçları", "Kabuk Sonuçları", "Betonarme Tasarım", "Çelik Tasarım"];

/* ---------- contour map ----------
   Each quadrant of the raft is stored on its own sheet with its own origin and scale. */

const sheet = (ox, oy, sx, sy) => (text) =>
  text.trim().split(/\s+/).map((p) => {
    const [x, y] = p.split(",").map(Number);
    return `${(ox + x / sx).toFixed(1)},${(oy + y / sy).toFixed(1)}`;
  }).join(" ");
const NW = sheet(300, 470, 1.742, 3);
const SW = sheet(300, 880, 1.742, 3);
const NE = sheet(1340, 470, 1.889, 3);
const SE = sheet(1340, 880, 1.889, 3);
const MID = sheet(1000, 600, 2.8, 3);

const rings = [
  ["orange",
    "50,1272 50,1150 38,1050 28,900 26,750 19,520 19,150 35,130 42,95 85,70 88,33 310,33 400,45 470,60 600,75 690,88 780,88 850,65 960,52 1200,33 1568,33",
    "0,33 240,33 330,45 430,55 470,40 650,75 720,88 830,88 870,68 1020,50 1060,45 1220,33 1430,33 1500,75 1515,110 1542,150 1542,500 1530,700 1510,950 1500,1100 1495,1272",
    "1500,45 1510,250 1500,400 1530,600 1542,700 1542,1180 1500,1240 1440,1275 1420,1285 1220,1285 1060,1262 860,1250 800,1228 720,1228 650,1250 500,1262 430,1260 250,1285 0,1285",
    "1568,1285 1210,1285 1040,1255 860,1250 780,1228 690,1228 640,1250 480,1255 420,1275 310,1285 90,1285 85,1260 40,1225 40,1170 19,1165 19,850 40,800 25,700 35,500 48,400 50,45"],
  ["amber",
    "64,1272 64,1150 50,1000 42,800 45,650 50,450 52,300 75,220 85,150 120,120 165,70 400,75 410,90 580,95 600,110 880,108 900,95 1070,90 1080,75 1220,68 1460,68 1568,50",
    "0,75 200,70 400,72 410,85 590,95 610,108 970,108 980,95 1120,90 1120,72 1200,68 1380,75 1430,95 1440,125 1470,180 1505,215 1512,350 1512,500 1508,700 1500,950 1490,1272",
    "1490,45 1490,300 1505,500 1510,800 1500,1000 1480,1110 1450,1150 1430,1200 1400,1228 1380,1240 1120,1250 1110,1230 980,1228 960,1212 600,1210 590,1228 410,1232 400,1255 0,1250",
    "1568,1260 1440,1250 1060,1250 1060,1228 900,1228 880,1210 600,1210 580,1228 410,1230 400,1252 165,1250 120,1225 110,1180 75,1130 50,1000 45,800 48,500 64,300 64,45"],
  ["yellow",
    "84,1272 84,860 70,790 62,600 66,400 88,320 95,250 110,215 145,190 180,150 205,145 208,120 280,108 480,108 500,142 980,142 985,120 1050,108 1140,100 1150,90 1350,92 1400,108 1440,92 1568,88",
    "0,95 40,108 95,90 310,92 330,105 480,108 500,142 1020,142 1030,118 1100,108 1330,120 1340,145 1390,165 1410,210 1435,240 1450,300 1470,340 1480,400 1490,600 1488,790 1475,830 1472,1272",
    "1472,45 1475,510 1490,540 1495,700 1490,850 1470,980 1455,1080 1430,1110 1390,1140 1345,1170 1335,1210 1040,1210 1020,1175 500,1175 490,1210 330,1215 320,1228 95,1228 40,1208 0,1215",
    "1568,1225 1440,1225 1410,1208 1360,1215 1150,1228 1130,1215 1000,1210 980,1178 500,1178 495,1208 210,1208 200,1180 165,1165 120,1110 105,1050 80,980 68,900 62,700 65,540 84,500 84,45"],
  ["lime",
    "84,1272 84,700 84,450 100,330 108,260 140,235 160,210 200,180 250,140 270,132 490,132 500,145 985,145 1050,132 1150,138 1300,138 1400,130 1568,130",
    "0,130 100,130 160,120 330,130 420,135 500,142 1020,142 1080,132 1330,148 1345,160 1395,190 1410,250 1440,270 1450,350 1470,400 1475,600 1472,1272",
    "1472,45 1472,500 1475,700 1470,850 1450,1000 1430,1070 1370,1110 1340,1170 1330,1185 1030,1187 1020,1175 500,1175 480,1187 100,1185 0,1190",
    "1568,1195 1400,1185 990,1183 980,1178 500,1178 270,1178 205,1175 180,1140 120,1080 100,1000 84,880 78,700 84,45"],
  ["leaf",
    "102,1272 102,900 105,600 115,450 120,330 150,290 180,230 230,195 270,172 500,182 960,182 1050,158 1200,160 1300,155 1400,165 1470,190 1568,185",
    "0,180 60,170 110,180 180,158 410,160 430,178 1040,175 1180,175 1270,180 1320,200 1370,240 1400,270 1420,300 1440,380 1450,480 1455,700 1450,1272",
    "1450,45 1455,500 1450,750 1440,880 1410,990 1370,1060 1310,1110 1230,1145 430,1143 400,1160 200,1155 100,1165 0,1150",
    "1568,1155 1440,1165 1350,1145 1200,1160 1070,1155 1045,1143 300,1143 230,1140 200,1100 150,1050 120,950 105,850 102,700 102,45"],
  ["green",
    "118,1272 118,900 118,700 130,480 145,350 170,290 200,240 250,215 300,200 500,206 960,206 1040,190 1290,190 1330,180 1400,225 1450,235 1500,210 1568,215",
    "0,215 40,225 90,215 170,195 420,195 430,205 1080,206 1230,208 1290,230 1320,255 1370,290 1400,350 1420,400 1435,500 1430,1272",
    "1430,45 1430,500 1425,720 1405,860 1390,960 1340,1020 1290,1070 1230,1115 950,1115 430,1112 400,1130 150,1130 70,1140 0,1130",
    "1568,1120 1480,1130 1400,1140 1300,1130 1080,1138 1045,1112 550,1112 300,1105 250,1080 230,1040 190,980 150,950 130,850 118,700 118,45"],
  ["spring",
    "141,1272 135,900 130,650 140,500 150,420 180,340 200,290 270,260 310,230 490,240 520,235 690,243 850,235 1020,243 1040,225 1280,225 1310,240 1400,270 1480,240 1568,250",
    "0,240 80,240 170,225 400,225 420,242 960,242 1150,240 1230,240 1290,270 1330,320 1370,370 1390,430 1395,500 1415,600 1412,1272",
    "1412,45 1410,500 1400,700 1370,860 1340,960 1270,1020 1220,1070 1150,1080 700,1078 430,1085 180,1095 130,1070 0,1090",
    "1568,1080 1490,1070 1400,1070 1320,1080 1250,1095 1080,1100 1050,1078 550,1080 400,1080 300,1065 250,1040 215,980 180,900 150,830 135,700 138,500 141,45"],
  ["teal",
    "152,1272 152,900 150,700 155,500 175,430 200,370 240,310 290,270 480,270 520,245 560,270 650,275 690,250 740,275 820,280 870,248 1040,248 1280,248 1330,280 1400,290 1568,280",
    "0,270 90,270 170,245 570,248 600,290 1010,282 1040,245 1150,250 1220,270 1280,320 1320,380 1360,430 1380,560 1395,700 1390,1272",
    "1388,45 1385,500 1375,700 1350,830 1320,920 1240,990 1200,1020 1110,1070 950,1060 880,1035 830,1050 720,1038 640,1065 430,1075 160,1075 100,1045 0,1060",
    "1568,1060 1400,1045 1310,1055 1250,1070 870,1070 820,1040 560,1038 490,1065 440,1078 370,1065 330,1040 280,1000 250,960 210,900 180,830 160,700 152,500 152,45"],
  ["cyan",
    "175,1272 175,900 165,740 170,600 185,480 210,420 240,340 330,318 480,310 520,290 600,315 700,318 830,318 860,292 1200,298 1280,295 1350,310 1430,320 1568,330",
    "0,320 70,318 100,300 330,290 560,295 590,308 800,310 1070,305 1110,290 1230,315 1270,360 1310,420 1350,480 1365,700 1370,900 1372,1272",
    "1370,45 1365,400 1350,650 1330,780 1290,880 1250,950 1190,990 1000,1025 850,1015 720,1010 580,1020 430,1022 160,1025 80,1000 0,1010",
    "1568,1020 1400,1005 1250,1020 1050,1028 860,1020 830,1010 500,1012 440,1025 350,1010 310,980 270,930 220,850 190,750 180,600 175,45"],
  ["sky",
    "190,1272 190,900 180,760 190,650 200,520 240,450 270,380 350,345 390,322 520,308 600,325 790,335 860,308 1200,318 1300,308 1420,360 1430,382 1568,370",
    "0,345 70,335 180,312 430,302 570,305 590,330 1050,330 1110,305 1210,325 1250,370 1290,450 1330,520 1350,600 1345,900 1352,1272",
    "1350,45 1345,400 1330,600 1300,780 1250,850 1200,950 1140,990 1000,1020 900,1005 710,985 560,1012 430,1018 150,1020 60,975 0,985",
    "1568,995 1400,965 1290,1000 1160,1018 1000,1010 870,1005 820,985 550,985 480,1005 400,1010 340,960 310,920 260,850 220,750 195,600 190,45"],
  ["azure",
    "218,1272 218,900 215,700 230,560 270,500 290,410 350,412 390,365 520,372 690,372 860,362 1160,365 1170,352 1250,355 1260,370 1330,380 1420,395 1435,455 1568,455",
    "-8,455 0,440 25,390 190,372 200,355 300,355 320,365 500,365 620,372 760,372 800,368 1060,370 1100,365 1210,395 1250,450 1290,490 1310,550 1330,590 1330,1272",
    "1330,45 1325,400 1310,650 1280,780 1250,900 1180,910 1140,950 1000,955 800,948 710,955 530,950 430,962 310,955 210,965 180,950 60,930 10,905 0,870",
    "1568,862 1450,865 1420,930 1260,948 1255,962 1170,962 960,950 840,945 640,948 440,958 360,940 320,920 300,850 240,820 240,700 215,640 220,400 218,45"],
];

const patches = [
  ["crimson", NW("19,860 34,1080 38,1272") + " " + SW("38,45 35,200 19,430")],
  ["crimson", NE("1542,1040 1515,1120 1520,1272") + " " + SE("1520,45 1515,210 1542,300")],
  ["crimson", NE("510,33 560,40 960,48 1030,38 1030,33")],
  ["crimson", NW("480,33 520,42 900,46 960,33")],
  ["crimson", SE("510,1285 560,1276 960,1272 1030,1285")],
  ["crimson", SW("480,1285 520,1272 900,1278 970,1285")],
];

const inner = [
  ["blue", NW("250,1272 248,800 258,650 270,560 320,490 350,480 390,425 500,428 690,440 830,428 960,436 1060,425 1130,430 1145,445 1155,400 1230,400 1255,450 1355,450 1360,480 1362,600 1325,605 1320,680 1285,690 1265,775 1230,785 1200,870 1180,945 1135,968 1135,1272") + " " + SW("1135,45 1135,350 1150,400 1215,450 1235,535 1270,545 1290,600 1310,635 1330,705 1370,740 1378,770 1376,862 1260,865 1230,920 1165,930 1150,915 1140,880 1050,890 960,885 700,888 570,898 440,890 330,850 310,800 280,760 250,660 245,400 250,45")],
  ["blue", NE("332,1272 332,965 310,905 245,870 230,790 185,770 160,690 125,650 120,610 95,605 72,570 68,455 140,450 195,455 215,400 290,390 310,400 325,440 340,430 430,418 530,430 710,430 800,435 900,422 1010,420 1090,435 1200,465 1225,490 1260,520 1260,555 1290,575 1295,1272") + " " + SE("1300,45 1302,400 1300,550 1285,690 1260,760 1250,835 1215,830 1210,870 1150,885 1090,898 930,880 800,875 710,892 530,880 430,898 330,880 315,910 290,925 235,920 205,872 150,878 90,862 85,745 130,715 130,675 165,640 170,595 205,560 210,490 265,440 282,365 332,352")],
  ["navy", NW("295,1272 280,1100 280,1015 320,940 315,860 325,770 305,700 318,580 350,545 490,540 500,505 600,490 700,512 830,486 960,508 1030,488 1140,485 1145,455 1160,430 1210,470 1230,500 1230,535 1255,540 1275,575 1260,615 1235,620 1225,700 1190,740 1120,780 1100,745 1075,720 1055,665 1035,640 995,600 955,620 920,610 915,655 870,660 850,710 830,740 805,800 805,870 780,880 785,1010 805,1020 835,1100 865,1160 868,1272") + " " + SW("868,45 868,155 840,180 835,210 810,250 805,305 780,310 780,450 805,455 830,560 860,605 865,655 915,670 925,705 960,690 995,715 1010,670 1050,650 1080,575 1125,530 1190,570 1240,660 1235,700 1280,740 1230,790 1230,835 1190,860 1155,890 1140,855 1120,830 1050,838 960,815 830,825 700,815 620,838 595,838 575,785 440,765 410,798 330,770 320,700 318,560 295,450 285,280 295,150 300,45")],
  ["navy", NE("595,1272 622,1240 622,1160 650,1150 655,1080 685,1060 690,820 660,810 660,740 635,700 620,660 580,655 565,610 520,625 485,600 470,640 430,650 410,710 380,745 345,790 295,765 230,705 220,625 180,575 225,530 228,490 255,455 315,440 340,490 430,478 530,502 620,490 710,490 800,502 870,485 940,478 970,530 1030,535 1060,490 1110,510 1150,545 1200,550 1215,610 1235,660 1235,705 1258,710 1258,830 1240,850 1240,950 1250,1165 1280,1175 1280,1230 1245,1240 1255,1272") + " " + SE("1255,45 1265,200 1258,350 1225,375 1225,570 1250,610 1245,705 1190,720 1180,770 1080,790 1045,830 960,815 890,825 800,808 710,830 530,812 430,835 350,830 325,845 310,885 260,865 230,830 230,785 185,745 225,700 250,620 300,565 350,535 385,560 415,610 430,665 470,675 488,718 530,700 565,708 585,655 635,650 660,590 660,520 690,500 688,260 660,255 650,190 625,160 622,90 595,45")],
  ["blue", NW("475,605 515,620 555,605 560,640 600,660 620,710 640,765 670,800 670,1050 640,1080 615,1155 475,1155 460,1110 410,1070 380,1020 375,960 345,940 350,870 370,850 380,770 395,715 430,700 440,655 470,650")],
  ["blue", SW("470,162 615,162 640,215 655,250 668,260 670,350 697,370 697,430 670,450 665,520 640,560 610,620 590,640 585,678 510,682 430,650 410,610 408,560 370,520 350,480 338,430 360,370 385,330 385,280 415,250 420,215 445,205")],
  ["blue", NE("928,642 1080,645 1090,690 1120,740 1148,755 1150,850 1165,880 1148,900 1148,1015 1115,1030 1110,1065 1080,1070 1060,1120 1045,1158 945,1155 925,1115 895,1060 865,1030 840,990 838,825 865,815 885,765 895,710 915,700")],
  ["blue", SE("945,162 1050,162 1085,205 1090,235 1120,280 1155,305 1155,505 1120,530 1115,625 1085,640 1080,675 1030,660 1003,692 985,660 925,660 920,620 895,590 865,530 835,490 837,330 865,310 870,270 895,250 905,220 930,205")],
  ["azure", NW("475,712 560,715 565,760 588,770 590,800 615,820 615,990 590,1020 575,1060 475,1060 440,1010 410,960 410,880 440,850 445,770 470,760")],
  ["azure", SW("475,258 575,260 590,305 612,330 612,500 585,515 585,560 528,562 512,612 500,580 500,555 445,545 415,500 415,355 445,330 447,308 475,300")],
  ["azure", NE("928,760 1083,765 1083,860 1110,885 1083,920 1080,1010 1050,1025 1045,1060 957,1060 955,1030 925,1005 925,965 898,960 898,820 915,815")],
  ["azure", SE("960,258 1050,258 1052,285 1083,310 1083,565 1030,552 930,550 922,505 895,495 895,355 920,350 930,305 957,300")],
  ["azure", NW("915,715 1000,710 1010,750 1045,755 1060,800 1088,820 1095,890 1118,910 1135,968 1190,940 1190,1200 1130,1200 1118,1168 1080,1165 1060,1140 965,1158 945,1110 895,1105 865,1060 862,820 890,810")],
  ["azure", SW("960,160 990,148 1060,178 1080,150 1120,148 1135,118 1190,118 1190,420 1150,400 1135,350 1120,405 1095,430 1090,500 1060,515 1050,565 1000,605 915,605 890,550 862,500 865,255 895,205 950,200")],
  ["azure", NE("480,708 565,715 575,760 598,770 600,815 628,820 625,1060 600,1080 590,1115 515,1120 490,1170 420,1140 405,1170 375,1170 355,1235 330,1240 250,1240 250,960 330,965 345,910 365,905 380,830 410,800 430,755 475,750")],
  ["azure", SE("490,160 520,158 540,205 595,208 600,240 625,260 630,500 600,550 570,600 480,610 470,565 430,565 415,520 385,490 380,440 350,410 350,380 332,352 280,355 260,350 250,80 355,80 370,120 375,150 410,178")],
  ["sky", NW("475,818 560,820 565,855 587,880 585,910 570,935 555,985 530,1010 505,1010 500,990 475,960")],
  ["sky", NW("948,768 972,768 975,800 1000,815 1030,820 1035,1015 935,1013 920,960 890,940 890,870 915,860 920,820 945,815")],
  ["sky", SW("505,305 530,308 532,335 570,370 587,405 585,450 560,500 475,500 475,355 503,350")],
  ["sky", SW("935,302 1030,300 1035,480 1010,505 975,525 970,550 947,550 945,515 920,500 918,450 890,430 892,380 915,355 918,320")],
  ["sky", NE("957,815 1048,815 1048,963 957,963")],
  ["sky", NE("507,768 537,768 540,800 565,820 567,850 597,870 595,935 567,965 550,1018 442,1018 442,840 460,815 505,812")],
  ["sky", SE("957,353 1048,355 1048,500 957,500")],
  ["sky", SE("442,303 550,305 568,345 597,380 597,440 568,465 565,500 540,520 537,552 507,552 500,510 460,505 442,440")],
];

/* The rings round the core are symmetric: one quarter is stored, the rest is reflected. */
const quarter = [
  ["sky", "655,143 900,143 905,180 940,215 1020,217 1065,275 1105,290 1145,340 1175,375 1200,420 1225,480 1280,520 1310,600 1325,720 1330,884"],
  ["cyan", "655,222 820,222 825,260 860,285 950,290 1020,285 1070,340 1105,375 1140,440 1170,480 1210,530 1240,600 1260,700 1268,884"],
  ["teal", "655,298 900,298 905,330 975,340 1020,370 1070,410 1100,470 1140,530 1170,600 1195,680 1210,800 1212,884"],
  ["spring", "655,372 745,355 850,355 930,372 1000,400 1060,450 1080,500 1115,560 1140,640 1165,720 1172,884"],
  ["green", "655,428 715,380 825,378 860,418 950,430 1040,455 1065,490 1080,570 1105,640 1130,740 1135,884"],
  ["leaf", "655,465 850,450 950,470 1020,485 1035,530 1040,600 1055,700 1070,760 1075,884"],
  ["lime", "655,555 755,555 765,515 895,515 920,555 990,555 1015,640 1040,740 1047,884"],
];
const reflect = (text) => {
  const q = text.split(" ").map((p) => p.split(",").map(Number));
  const flipX = q.map(([x, y]) => [1310 - x, y]).reverse();
  const top = [...flipX, ...q];
  const all = [...top, ...top.map(([x, y]) => [x, 1768 - y]).reverse()];
  return MID(all.map((p) => p.join(",")).join(" "));
};

/* ---------- finite element mesh ---------- */

const clamp = (v) => Math.max(0, Math.min(1, v));
/* Rows sag between column heads near the long edges and run straight across the middle. */
const bend = (x, y) => {
  const side = clamp(Math.abs(x - 1233) / 200 - 0.4);
  const k = clamp(Math.min(x - 326, 2141 - x) / 120) * clamp(Math.min(y - 509, 1280 - y) / 60) * side;
  const far = (y - 894) / 386;
  return [
    x + k * 4 * Math.sin(y / 52 + x / 210),
    y - k * far * 9 * Math.cos((Math.abs(x - 1233) - 382) / 41) + k * 2 * Math.sin(x / 31 + y / 70),
  ];
};
const poly = (pts) => "M" + pts.map(([x, y]) => `${x.toFixed(1)} ${y.toFixed(1)}`).join("L");
const run = (x1, y1, x2, y2) => {
  const n = Math.max(1, Math.round(Math.hypot(x2 - x1, y2 - y1) / 24));
  return poly(Array.from({ length: n + 1 }, (_, i) => bend(x1 + ((x2 - x1) * i) / n, y1 + ((y2 - y1) * i) / n)));
};
const px = 24.2;
const py = 24.1;
const colX = (i) => 326 + px * i;
const rowY = (j) => 509 + py * j;
const zones = [[5, 25], [50, 70]];
const zoneRows = [6, 26];

function buildMesh() {
  const d = [];
  for (let i = 0; i <= 75; i++) {
    const x = colX(i);
    const zone = zones.find(([a, b]) => i > a && i < b);
    const split = zone && (i - zone[0]) % 2 === 1;
    if (!split) d.push(run(x, 497, x, 1292));
    else {
      const arch = 34 * Math.abs(Math.sin(((i - zone[0]) / 10) * Math.PI));
      const top = rowY(zoneRows[0]) + 30 - arch;
      const bottom = rowY(zoneRows[1]) - 30 + arch;
      d.push(run(x, 497, x, top), run(x, bottom, x, 1292));
      [-px / 3, px / 3].forEach((o) => {
        d.push(run(x, top, x + o, top + 24), run(x + o, top + 24, x + o, bottom - 24), run(x + o, bottom - 24, x, bottom));
      });
    }
    const lean = 10 + 12 * Math.abs(Math.sin((i / 75) * Math.PI * 2));
    d.push(poly([[x, 497], [x - lean, 481]]), poly([[x, 1292], [x - lean, 1308]]));
  }
  for (let j = 0; j <= 32; j++) {
    const y = rowY(j);
    const split = j > zoneRows[0] && j < zoneRows[1] && (j - zoneRows[0]) % 2 === 1;
    if (!split) d.push(run(326, y, 2141, y));
    else {
      const cuts = zones.map(([a, b]) => [colX(a) + 34 * Math.abs(Math.cos(j / 3)), colX(b) - 34 * Math.abs(Math.sin(j / 3))]);
      d.push(run(326, y, cuts[0][0], y), run(cuts[0][1], y, cuts[1][0], y), run(cuts[1][1], y, 2141, y));
      cuts.forEach(([a, b]) => [-py / 3, py / 3].forEach((o) => {
        d.push(run(a, y, a + 24, y + o), run(a + 24, y + o, b - 24, y + o), run(b - 24, y + o, b, y));
      }));
    }
    const drop = (j < 16 ? 1 : -1) * (8 + 12 * (1 - Math.abs(j - 16) / 16));
    d.push(poly([[326, y], [311, y + drop]]), poly([[2141, y], [2156, y + drop]]));
  }
  /* column heads on the long edges: a diamond with one cross inside */
  [[1105, 540], [1361, 540], [1105, 1250], [1361, 1250]].forEach(([cx, cy]) => {
    d.push(`M${cx - 50} ${cy + 8}l34-20h32l34 20-34 20-16 10-16-10zM${cx - 32} ${cy + 18}l32-24 32 24`);
  });
  return d.join("");
}
function buildCoreMesh() {
  const d = [];
  for (let i = -5; i <= 5; i++) {
    const x = 1233.5 + i * 24.2;
    const edge = 1233.5 + i * 26.6;
    d.push(poly([[edge, 761], [x, 773], [x + 1, 900], [x, 1016], [edge, 1028]]));
  }
  for (let j = -4; j <= 4; j++) {
    const y = 894.5 + j * 24.2;
    const edge = 894.5 + j * 26.6;
    d.push(poly([[1100, edge], [1113, y], [1233, y - 4 * Math.sign(j)], [1355, y], [1367, edge]]));
  }
  return d.join("");
}
const mesh = buildMesh();
const coreMesh = buildCoreMesh();
const frames = [0, 8, 15, 22, 29];

const grid = Array.from({ length: 40 }, (_, i) => i);

const RaftModel = () => (
  <Model aria-label="Radye temel taban basıncı">
    <defs>
      <clipPath id="outsideCore">
        <path clipRule="evenodd" d="M311 481H2157V1309H311zM1100 761V1028H1367V761z" />
      </clipPath>
    </defs>
    <g transform="translate(-51 -164)">
      <g stroke="#dcdcec" strokeWidth="1.500">
        {grid.map((i) => <line key={"v" + i} x1={88 + i * 63.6} x2={88 + i * 63.6} y1="160" y2="1320" />)}
        {grid.slice(0, 18).map((i) => <line key={"h" + i} x1="50" x2="2570" y1={194.500 + i * 63.650} y2={194.500 + i * 63.650} />)}
      </g>
      <path d="M342.500 160V1320M50 1276.500H2570" stroke="#7f7f7f" fill="none" />
      <g shapeRendering="crispEdges">
        <rect x="311" y="481" width="1846" height="828" fill={C.red} />
        {patches.map(([c, pts], i) => <polygon key={i} points={pts} fill={C[c]} />)}
        {rings.map(([c, a, b, e, f]) => (
          <polygon key={c} points={[NW(a), NE(b), SE(e), SW(f)].join(" ")} fill={C[c]} />
        ))}
        {inner.map(([c, pts], i) => <polygon key={i} points={pts} fill={C[c]} />)}
        {quarter.map(([c, q]) => <polygon key={c} points={reflect(q)} fill={C[c]} />)}
        <polygon points={MID("350,702 590,690 720,690 958,702 958,1068 720,1078 590,1078 350,1068")} fill={C.yellow} />
      </g>
      <g fill="none" stroke="#00003c">
        <path d={mesh} clipPath="url(#outsideCore)" strokeOpacity="0.700" />
        <path d={coreMesh} strokeOpacity="0.700" />
        {frames.map((f) => <rect key={f} x={311 + f} y={481 + f} width={1846 - 2 * f} height={828 - 2 * f} strokeOpacity="0.450" />)}
        {[0, 7, 13].map((f) => <rect key={f} x={1100 + f} y={761 + f} width={267 - 2 * f} height={267 - 2 * f} strokeOpacity="0.600" />)}
        <path strokeOpacity="0.700" d="M311 481L340 510M2157 481L2128 510M311 1309L340 1280M2157 1309L2128 1280M1100 761l13 13M1367 761l-13 13M1100 1028l13-13M1367 1028l-13-13" />
      </g>
    </g>
  </Model>
);

/* ---------- pieces ---------- */

const Tools = ({ names, w }) =>
  names.map((n, i) => {
    if (n === "|") return <BarSep key={i} />;
    const id = n.replace("*", "");
    return <ToolButton key={i} type="button" $w={w} $on={n !== id} aria-label={id}><Icon name={id} /></ToolButton>;
  });

const RibbonGroup = ({ g }) => (
  <GroupBox $w={g.w}>
    <GroupBody>
      {g.links && (
        <LinkCol>
          {g.links.map(([ic, t]) => <button key={t} type="button"><Icon name={ic} />{t}</button>)}
        </LinkCol>
      )}
      {(g.items || []).map(([kind, w, ...rest], i) => {
        if (kind === "|") return <Rule key={i} $w={w} />;
        if (kind === "small")
          return (
            <SmallCol key={i} $w={w}>
              {rest.map((n, k) => <button key={k} type="button" aria-label={n}><Icon name={n} /></button>)}
            </SmallCol>
          );
        return (
          <Big key={i} type="button" $w={w} $on={kind === "deprem"}>
            <Art name={kind} />
            {rest.map((t, k) => (
              <Line key={k}>{t.replace("▾", "").trim()}{t.includes("▾") && <Caret />}</Line>
            ))}
          </Big>
        );
      })}
    </GroupBody>
    <GroupName>{g.name}</GroupName>
  </GroupBox>
);

const Check = ({ children, on, off }) => (
  <CheckLabel $off={off}>
    <input type="checkbox" defaultChecked={on} disabled={off} />
    {children}
  </CheckLabel>
);
const Select = ({ label, value, f }) => (
  <Combo $f={f}>
    <select aria-label={label} defaultValue={value}><option>{value}</option></select>
    <Chevron />
  </Combo>
);

const VisualDialog = () => (
  <Dialog role="dialog" aria-labelledby="dlgTitle">
    <DialogHead>
      <h2 id="dlgTitle">Görselleştirme</h2>
      <button type="button" aria-label="Kapat">
        <svg width="11" height="11" viewBox="0 0 11 11"><path d="M.5 .5l10 10M10.500 .5l-10 10" stroke="#888" /></svg>
      </button>
    </DialogHead>
    <DialogBody>
      <PageList>
        {pages.map((p) => (
          <li key={p}><PageItem type="button" $on={p === "Kabuk Sonuçları"}>{p}</PageItem></li>
        ))}
      </PageList>
      <Pane onSubmit={(e) => e.preventDefault()}>
        <Checks>
          <Check on>Ağları göster</Check>
          <Check>İşaretleriyle göster</Check>
          <Check on>Lokal akslar</Check>
          <Check>Zarf sonuçlarında min. değerleri göster</Check>
          <Check>Betonarme aks sonuçları</Check>
          <Check>Sıcak bölge skalası</Check>
        </Checks>
        <Fields>
          <Check>Ölçek çarpanı :</Check>
          <span />
          <Field aria-label="Ölçek çarpanı" defaultValue="1000" disabled />
          <span />
          <span />
          <Check>Tanımlı değer aralığı :</Check>
          <span />
          <Field aria-label="En küçük değer" defaultValue="0" disabled />
          <span>-&gt;</span>
          <Field aria-label="En büyük değer" defaultValue="0" disabled />
          <Check off>Mevcut donatı alanı :</Check>
          <span>Ø</span>
          <Field aria-label="Donatı çapı" defaultValue="0" disabled />
          <span>/</span>
          <Field aria-label="Donatı aralığı" defaultValue="0" disabled />
        </Fields>
        <Box $h={54} $mt={4} $pt={8}>
          <legend>Bileşen :</legend>
          <Row>
            <Select label="Bileşen" value="Radye temel sonuçları (4.10.3 Uygulanmış)" f="230" />
            <Select label="Sonuç" value="Taban Basıncı" f="120" />
          </Row>
        </Box>
        <Box $h={84} $mt={4} $pt={4}>
          <legend>Kombinasyon :</legend>
          <Row><Select label="Kombinasyon" value="1.4G+1.6Q" f="1" /></Row>
          <Row $j="flex-end"><Play type="button" disabled>Oynat</Play></Row>
          <Note>Düşey yükler</Note>
        </Box>
      </Pane>
    </DialogBody>
  </Dialog>
);

export default function App() {
  return (
    <>
      <Global />
      <Window>
        <TitleBar>
          <QuickBar>
            <Tools names={quick} />
            <Drop $w={14}><Caret /></Drop>
          </QuickBar>
          <Drop $w={22}><Caret c="#333" /></Drop>
          <Title>ideCAD Statik - BA3 WİKİ.ide10 - STATİK ŞABLON PROJE - [2. BODRUM]</Title>
          <WinButton type="button" aria-label="Küçült"><Icon name="winMin" /></WinButton>
          <WinButton type="button" aria-label="Önceki boyut"><Icon name="winMax" /></WinButton>
          <WinButton type="button" aria-label="Kapat"><Icon name="winX" /></WinButton>
        </TitleBar>

        <TabRow>
          {tabs.map(([t, w]) => <Tab key={t} type="button" $w={w} $on={t === "Raporlar"}>{t}</Tab>)}
          <TabTools>
            <Search>
              <Icon name="lens" size={14} />
              <input type="text" placeholder="Herhangi bir komut ara..." />
              <Drop $bg="#e9eaec"><Caret /></Drop>
            </Search>
            <BarSep />
            <ToolButton type="button" aria-label="Katmanlar"><Icon name="layers" /></ToolButton>
            <ToolButton type="button" aria-label="Katman ayarı"><Icon name="layers" /></ToolButton>
            <LayerBox>
              <Icon name="xbox" size={13} />
              <Icon name="lock" size={15} />
              <select aria-label="Katman" defaultValue="Standart"><option>Standart</option></select>
              <Drop><Caret /></Drop>
            </LayerBox>
            <ToolButton type="button" $w={57}>Görünüm</ToolButton>
            <Drop $w={14}><Caret /></Drop>
            <ToolButton type="button" aria-label="Araçlar"><Icon name="tools" /></ToolButton>
            <BarSep />
            <ToolButton type="button" $w={20} aria-label="Yardım"><Icon name="book" /></ToolButton>
            <Drop $w={14}><Caret /></Drop>
            <ToolButton type="button" $w={18} aria-label="Belgeyi küçült"><Icon name="winMin" size={12} /></ToolButton>
            <ToolButton type="button" $w={18} aria-label="Belgeyi yerleştir"><Icon name="winMax" size={12} /></ToolButton>
            <ToolButton type="button" $w={18} aria-label="Belgeyi kapat"><Icon name="winX" size={12} /></ToolButton>
          </TabTools>
        </TabRow>

        <Ribbon>{groups.map((g) => <RibbonGroup key={g.name} g={g} />)}</Ribbon>

        <IconRow>
          <IconStrip $w={1215}>
            <Tools names={stripA} />
            <Stretch />
            <Tools names={stripA2} />
          </IconStrip>
          <More type="button" aria-label="Diğer"><Caret c="#fff" /></More>
          <IconStrip $w={304}><Tools names={stripB} /></IconStrip>
          <More type="button" aria-label="Diğer"><Caret c="#fff" /></More>
        </IconRow>

        <Body>
          <Side>
            <SideTools>
              {sideIcons.map((n, i) =>
                n === "|" ? <SideSep key={i} /> : <ToolButton key={i} type="button" aria-label={n}><Icon name={n} /></ToolButton>
              )}
              <SideFoot><Caret /></SideFoot>
            </SideTools>
            <TreeTab type="button">Yapı Ağacı</TreeTab>
          </Side>
          <Work>
            <Canvas>
              <RaftModel />
              <Caption $c="#ff0000">Radye temel sonuçları - Taban Basıncı : 1.4G+1.6Q</Caption>
              <Caption>[kN/m²]</Caption>
              <Scale>
                <Swatches>{scaleColors.map((c) => <Swatch key={c} $c={c} />)}</Swatches>
                <Values>{scaleValues.map((v) => <li key={v}>{v}</li>)}</Values>
              </Scale>
              <ViewKeys>
                <button type="button">Y</button>
                <button type="button">N</button>
                <button type="button">Λ</button>
              </ViewKeys>
            </Canvas>
            <Status>
              <p>Hazır</p>
              <p>Komut :</p>
            </Status>
          </Work>
        </Body>

        <LogoButton type="button" aria-label="ideCAD">ide<b>CAD</b></LogoButton>
        <VisualDialog />
      </Window>
    </>
  );
}
